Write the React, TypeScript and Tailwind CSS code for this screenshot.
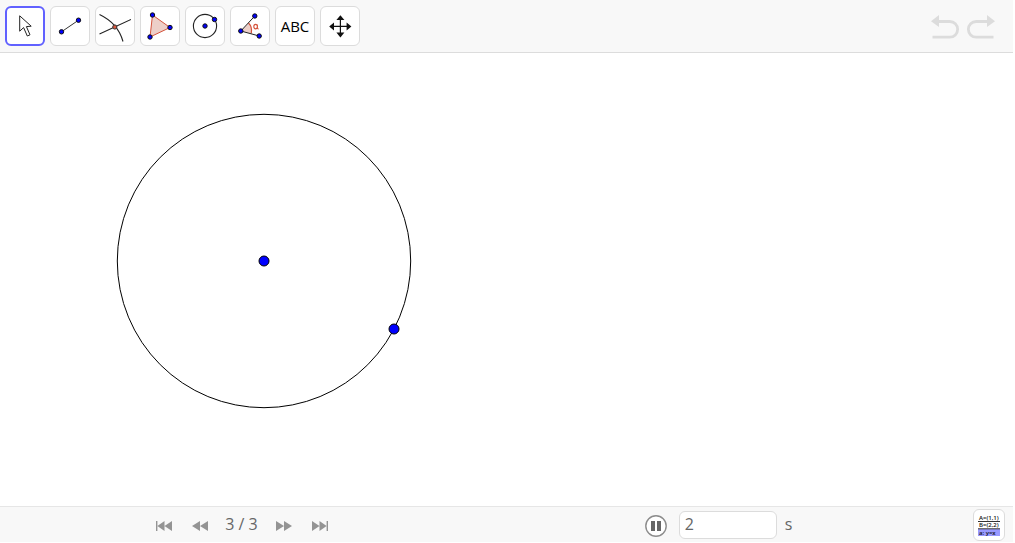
import React, { useState } from 'react';

const tools = [
  { id: 'move', label: 'Move', icon: <MoveIcon /> },
  { id: 'segment', label: 'Segment', icon: <SegmentIcon /> },
  { id: 'intersect', label: 'Intersect', icon: <IntersectIcon /> },
  { id: 'polygon', label: 'Polygon', icon: <PolygonIcon /> },
  { id: 'circle', label: 'Circle with center through point', icon: <CircleIcon /> },
  { id: 'angle', label: 'Angle', icon: <AngleIcon /> },
  { id: 'text', label: 'Text', icon: <span className="text-[15px] leading-5 text-black">ABC</span> },
  { id: 'pan', label: 'Move graphics view', icon: <PanIcon /> },
];

function Dot({ x, y }: { x: number; y: number }) {
  return <circle cx={x} cy={y} r="2.2" fill="#00f" stroke="#111" strokeWidth="1" />;
}

function Icon({ children }: { children: React.ReactNode }) {
  return (
    <svg viewBox="0 0 32 32" className="h-8 w-8" fill="none" aria-hidden="true">
      {children}
    </svg>
  );
}

function MoveIcon() {
  return (
    <Icon>
      <path
        d="M10.7 5.8V21.2L14.6 17.6L18.3 26L21 24.8L17.4 16.6L22.2 16.2Z"
        fill="#fff"
        stroke="#222"
        strokeWidth="1"
      />
    </Icon>
  );
}

function SegmentIcon() {
  return (
    <Icon>
      <path d="M7.5 21.8L24.5 10.2" stroke="#333" />
      <Dot x={7.5} y={21.8} />
      <Dot x={24.5} y={10.2} />
    </Icon>
  );
}

function IntersectIcon() {
  return (
    <Icon>
      <path d="M0.5 24L32 9.5M0.5 4.5C11 9.5 20 17 24 31.5" stroke="#222" strokeWidth="1.1" />
      <circle cx="15.8" cy="17" r="2.1" fill="#d9583e" stroke="#333" />
    </Icon>
  );
}

function PolygonIcon() {
  return (
    <Icon>
      <path d="M8.5 5L26 17.5L6 27Z" fill="#edcfc8" stroke="#d5533c" />
      <Dot x={8.5} y={5} />
      <Dot x={26} y={17.5} />
      <Dot x={6} y={27} />
    </Icon>
  );
}

function CircleIcon() {
  return (
    <Icon>
      <circle cx="16" cy="16" r="11.6" stroke="#222" strokeWidth="1.1" />
      <Dot x={16} y={16} />
      <Dot x={25.5} y={9.5} />
    </Icon>
  );
}

function AngleIcon() {
  return (
    <Icon>
      <path d="M7 21L14.5 13Q18.5 17 17.3 23.4Z" fill="#edcfc8" />
      <path d="M14.5 13Q18.5 17 17.3 23.4" stroke="#d5533c" strokeWidth="1.2" />
      <path d="M20.8 6L6.8 21L25.2 26" stroke="#222" />
      <path
        d="M23.4 14.4V17.8Q23.4 19 24.6 18.8M23.4 16.6C23.4 13.6 19.8 13.6 19.8 16.6C19.8 19.6 23.4 19.6 23.4 16.6Z"
        stroke="#d5533c"
        strokeWidth="1.1"
      />
      <Dot x={20.8} y={6} />
      <Dot x={6.8} y={21} />
      <Dot x={25.2} y={26} />
    </Icon>
  );
}

function PanIcon() {
  return (
    <Icon>
      <path d="M16.4 8V24M8 16.4H24" stroke="#111" strokeWidth="1.2" />
      <path
        d="M16.4 5.2L20.4 10H12.4ZM16.4 27.4L20.4 22.6H12.4ZM5.2 16.4L10 12.4V20.4ZM27.4 16.4L22.6 12.4V20.4Z"
        fill="#111"
      />
    </Icon>
  );
}

function UndoIcon({ flipped }: { flipped?: boolean }) {
  return (
    <svg viewBox="0 0 30 26" className={flipped ? 'h-[26px] w-[30px] -scale-x-100' : 'h-[26px] w-[30px]'} aria-hidden="true">
      <path d="M1 8.2L9 2V14Z" fill="#dcdcdc" />
      <path d="M7 8.5H19.8A7.8 7.8 0 0 1 19.8 24.2H2.5" fill="none" stroke="#dcdcdc" strokeWidth="2.8" />
    </svg>
  );
}

function NavButton({ label, path }: { label: string; path: string }) {
  return (
    <button aria-label={label} className="flex h-9 w-9 items-center justify-center">
      <svg viewBox="0 0 18 12" className="mt-0.5 h-3 w-[18px]" fill="#949494" aria-hidden="true">
        <path d={path} />
      </svg>
    </button>
  );
}

function Canvas() {
  return (
    <main className="min-h-0 flex-1 overflow-hidden bg-white">
      <svg viewBox="0 0 1015 453" className="h-[453px] w-[1015px] max-w-none" aria-label="Graphics view">
        <circle cx="264" cy="208" r="146.7" fill="none" stroke="#000" strokeWidth="1" />
        <circle cx="264" cy="208" r="5" fill="#00f" stroke="#000" />
        <circle cx="394" cy="276" r="5" fill="#00f" stroke="#000" />
      </svg>
    </main>
  );
}

export default function App() {
  const [activeTool, setActiveTool] = useState('move');
  const [seconds, setSeconds] = useState('2');

  return (
    <div className="flex h-screen flex-col bg-white pb-px font-['Open_Sans','Noto_Sans',sans-serif] text-[#666]">
      <header className="mr-0.5 flex items-center justify-between border-b border-[#dcdcdc] bg-[#f8f8f8] px-[5px] py-1.5">
        <div className="flex gap-[5px]">
          {tools.map((tool) => (
            <button
              key={tool.id}
              aria-label={tool.label}
              onClick={() => setActiveTool(tool.id)}
              className={
                activeTool === tool.id
                  ? 'flex h-10 w-10 items-center justify-center rounded-md border-2 border-[#6161ff] bg-white'
                  : 'flex h-10 w-10 items-center justify-center rounded-md border border-[#dcdcdc] bg-white'
              }
            >
              {tool.icon}
            </button>
          ))}
        </div>
        <div className="flex gap-1.5 pr-3">
          <button aria-label="Undo"><UndoIcon /></button>
          <button aria-label="Redo"><UndoIcon flipped /></button>
        </div>
      </header>

      <Canvas />

      <footer className="mr-0.5 flex h-9 items-center border-t border-[#e6e6e6] bg-[#f8f8f8] pl-[3px]">
        <nav className="flex flex-1 items-center justify-center" aria-label="Construction steps">
          <NavButton label="First step" path="M1 1H2.4V11H1ZM9.5 1V11L2.4 6ZM17 1V11L9.5 6Z" />
          <NavButton label="Previous step" path="M9 1V11L1 6ZM17 1V11L9 6Z" />
          <span className="w-12 pb-0.5 text-center text-base leading-5">3 / 3</span>
          <NavButton label="Next step" path="M1 1V11L9 6ZM9 1V11L17 6Z" />
          <NavButton label="Last step" path="M1 1V11L8.5 6ZM8.5 1V11L15.6 6ZM15.6 1H17V11H15.6Z" />
        </nav>
        <div className="flex flex-1 items-center justify-center">
          <button aria-label="Pause" className="mt-0.5 mr-3">
            <svg viewBox="0 0 22 22" className="h-[22px] w-[22px]" aria-hidden="true">
              <circle cx="11" cy="11" r="10.2" fill="#fff" stroke="#8c8c8c" strokeWidth="1.4" />
              <path d="M6 6H10V16H6ZM12 6H16V16H12Z" fill="#666" />
            </svg>
          </button>
          <input
            id="speed"
            aria-label="Seconds per step"
            value={seconds}
            onChange={(e) => setSeconds(e.target.value)}
            className="h-7 w-[98px] rounded-md border border-[#dcdcdc] bg-white px-[5px] pb-0.5 text-base leading-5"
          />
          <label htmlFor="speed" className="ml-2 pb-0.5 text-base leading-5">s</label>
        </div>
        <div className="w-14 shrink-0 pl-4">
          <button
            aria-label="Algebra view"
            className="flex h-8 w-8 items-center justify-center rounded-md border border-[#dcdcdc] bg-white"
          >
            <svg viewBox="0 0 24 24" className="h-6 w-6" aria-hidden="true">
              <rect x="1" y="16" width="22" height="7" fill="#9999ff" />
              <path d="M1 8.5H23M1 15.8H23" stroke="#333" strokeWidth="1" />
              <g fill="#111" fontSize="6" fontWeight="600">
                <text x="2" y="6.5">A=(1,1)</text>
                <text x="2" y="14.3">B=(2,2)</text>
                <text x="2" y="21.5">a: y=x</text>
              </g>
            </svg>
          </button>
        </div>
      </footer>
    </div>
  );
}
